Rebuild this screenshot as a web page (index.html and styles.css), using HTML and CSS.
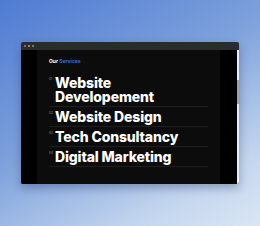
FILE: index.html
```html
<!DOCTYPE html>
<html lang="en">
<head>
    <meta charset="UTF-8">
    <meta name="viewport" content="width=device-width, initial-scale=1.0">
    <title>Our Services</title>
    <link rel="stylesheet" href="styles.css">
</head>
<body>
    <div class="window">
        <div class="titlebar">
            <span class="dot red"></span>
            <span class="dot yellow"></span>
            <span class="dot green"></span>
        </div>
        <div class="content">
            <div class="side"></div>
            <div class="panel">
                <div class="label">Our <span>Services</span></div>
                <ul class="services">
                    <li><sup>01</sup><span class="name">Website<br>Developement</span></li>
                    <li><sup>02</sup><span class="name">Website Design</span></li>
                    <li><sup>03</sup><span class="name">Tech Consultancy</span></li>
                    <li><sup>04</sup><span class="name">Digital Marketing</span></li>
                </ul>
            </div>
            <div class="side right"></div>
            <div class="scrollbar"><div class="thumb"></div></div>
        </div>
    </div>
</body>
</html>
```

FILE: styles.css
```css
html, body {
    margin: 0;
    height: 100%;
}
body {
    font-family: Inter, "Noto Sans", sans-serif;
    background: linear-gradient(150deg, #4f7bd2 0%, #7fa2dc 45%, #c3d5ee 80%, #dbe6f4 100%);
    padding: 42px 21px 0 21px;
    box-sizing: border-box;
}
.window {
    width: 218px;
    height: 142px;
    display: flex;
    flex-direction: column;
    box-shadow: 0 4px 10px rgba(20, 40, 90, 0.35);
    border-radius: 2px;
    overflow: hidden;
}
.titlebar {
    height: 8px;
    background: #2b2b2d;
    display: flex;
    align-items: center;
    gap: 2px;
    padding-left: 3px;
}
.dot {
    width: 2px;
    height: 2px;
    border-radius: 50%;
}
.red { background: #d0695d; }
.yellow { background: #c9a45a; }
.green { background: #5fae62; }
.content {
    flex: 1;
    display: flex;
    background: #000;
}
.side {
    width: 16px;
    background: #000;
}
.side.right {
    width: 17px;
}
.panel {
    flex: 1;
    background: #0c0c0c;
    padding: 8px 12px 0 12px;
}
.label {
    font-size: 5px;
    font-weight: 700;
    color: #fff;
    line-height: 6px;
}
.label span {
    color: #3a6fd8;
}
.services {
    list-style: none;
    margin: 9px 0 0 0;
    padding: 0;
    width: 159px;
}
.services li {
    display: flex;
    align-items: flex-start;
    border-bottom: 1px solid #1f1f1f;
    padding: 3px 0 2px 0;
}
.services sup {
    font-size: 3px;
    color: #9a9a9a;
    width: 6px;
    line-height: 5px;
    margin-top: 1px;
}
.name {
    font-size: 14px;
    font-weight: 800;
    color: #fff;
    line-height: 14px;
    letter-spacing: -0.01em;
}
.scrollbar {
    width: 2px;
    background: #e9eef6;
}
.thumb {
    height: 24px;
    margin-top: 30px;
    background: #9aa4ae;
}
```
